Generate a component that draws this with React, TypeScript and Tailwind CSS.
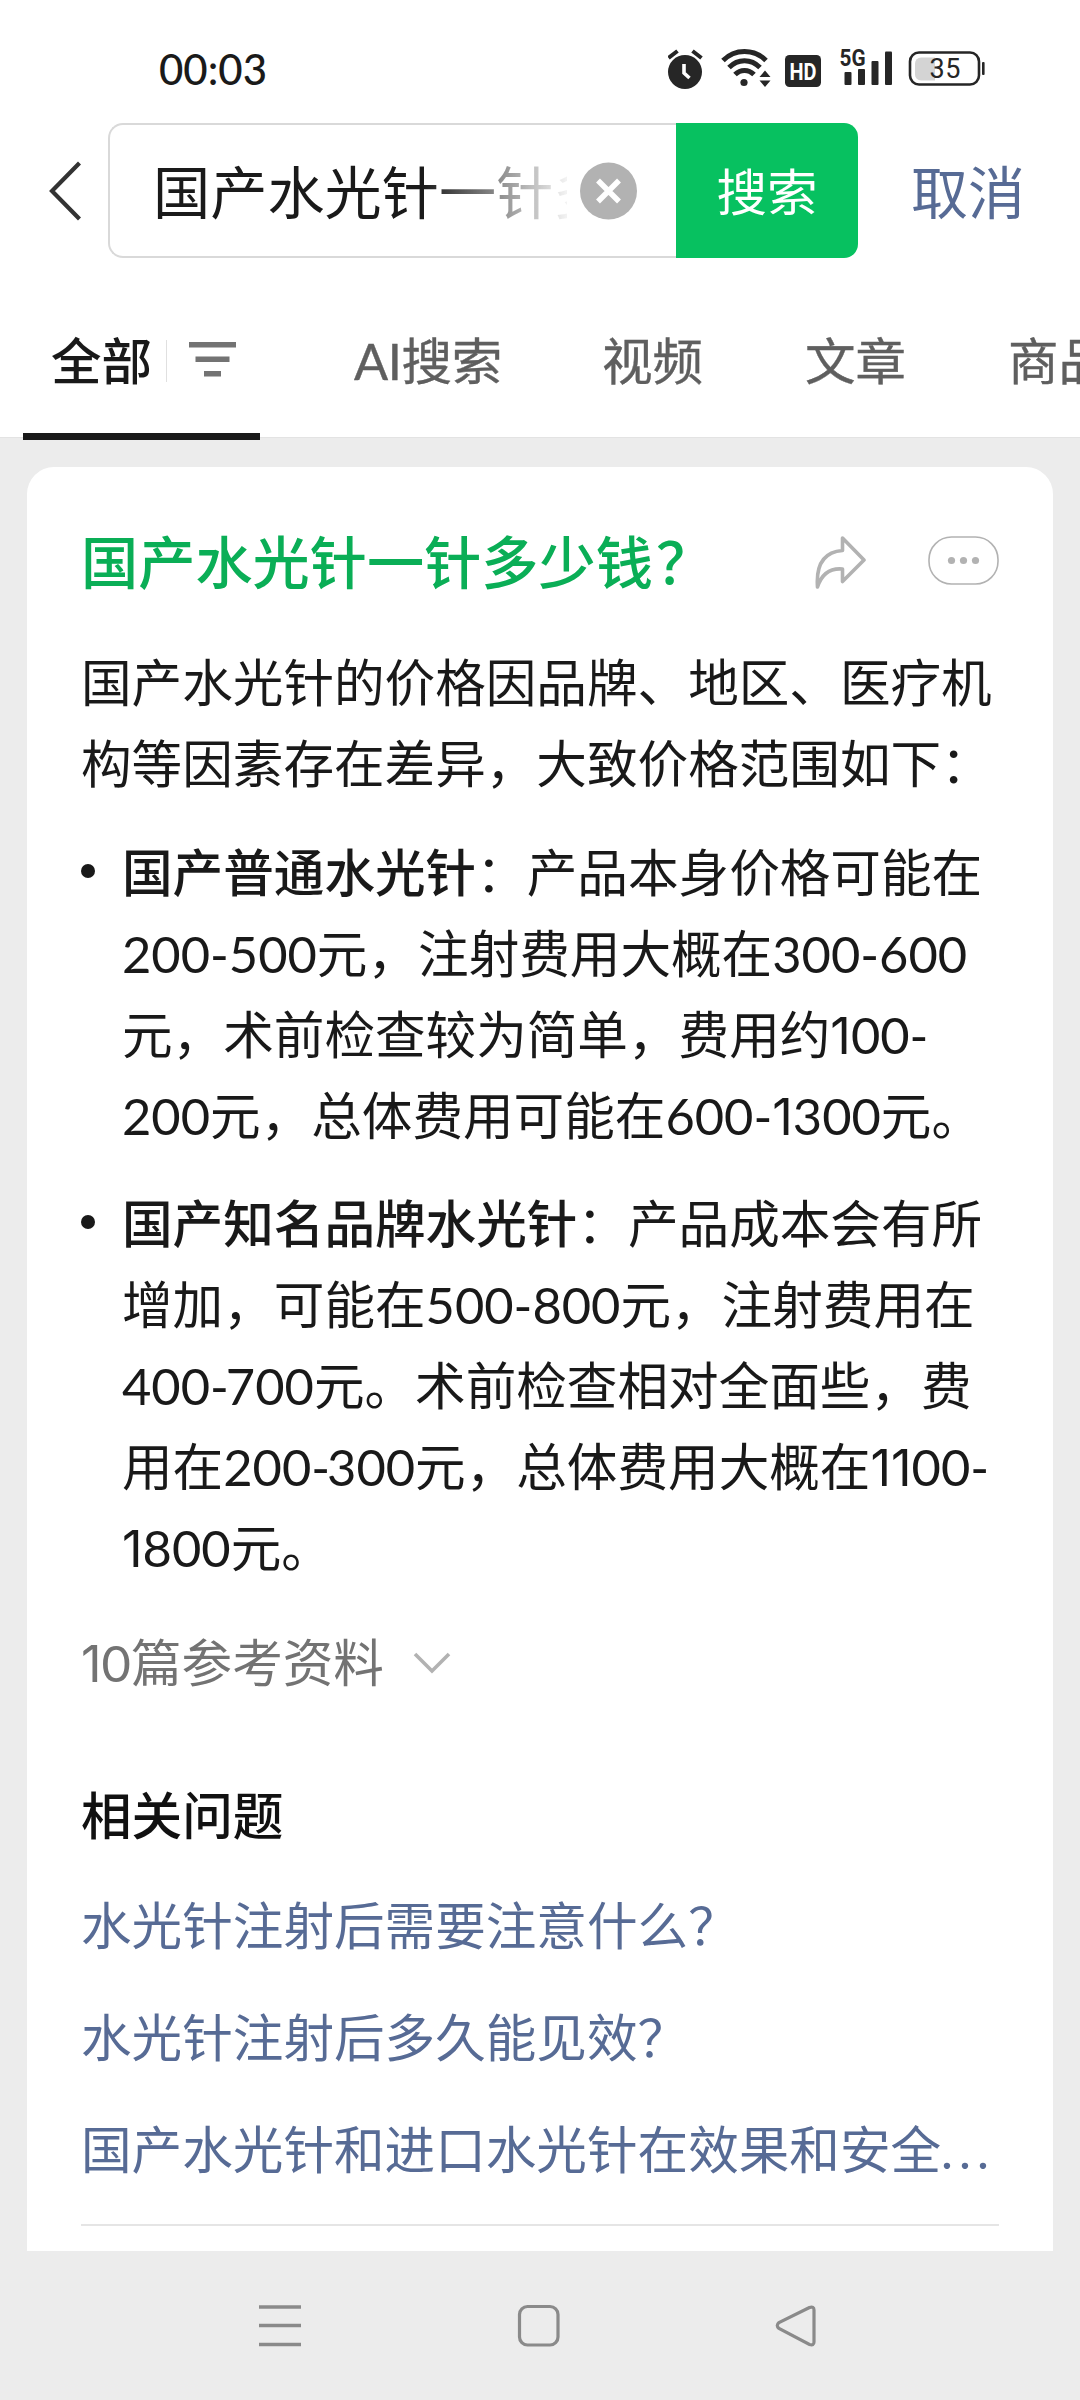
import type { ReactNode } from 'react'

const tabs = ['视频', '文章', '商品']

const intro = ['国产水光针的价格因品牌、地区、医疗机', '构等因素存在差异，大致价格范围如下：']

const priceItems = [
  {
    name: '国产普通水光针',
    first: '：产品本身价格可能在',
    rest: [
      '200-500元，注射费用大概在300-600',
      '元，术前检查较为简单，费用约100-',
      '200元，总体费用可能在600-1300元。',
    ],
  },
  {
    name: '国产知名品牌水光针',
    first: '：产品成本会有所',
    rest: [
      '增加，可能在500-800元，注射费用在',
      '400-700元。术前检查相对全面些，费',
      '用在200-300元，总体费用大概在1100-',
      '1800元。',
    ],
  },
]

const questions = ['水光针注射后需要注意什么？', '水光针注射后多久能见效？']

// narrow footless 1, and a tighter hyphen before 3 and 7
function Figures({ text }: { text: string }) {
  return text.split(/(1|-(?=[37]))/).map((part, i) => {
    if (part === '1') {
      return (
        <span key={i} className="font-[Inter] leading-none">
          1
        </span>
      )
    }
    if (part === '-') {
      return (
        <span key={i} className="tracking-[-3px]">
          -
        </span>
      )
    }
    return part
  })
}

function Line({ children }: { children: ReactNode }) {
  return <span className="block whitespace-nowrap">{children}</span>
}

function StatusBar() {
  return (
    <div className="flex h-[123px] items-start justify-between pt-[44px] pr-[92px] pl-[159px]">
      <span className="text-[42px] leading-[50px] font-medium text-[#1a1a1a]">00:03</span>
      <svg className="mt-[3px]" width="320" height="44" viewBox="668 47 320 44" fill="#262626">
        {/* alarm */}
        <circle cx="685" cy="72" r="17" />
        <path d="M668.5 58l9-7M701.5 58l-9-7" stroke="#262626" strokeWidth="4" />
        <path d="M684 64v9l5.500 5" stroke="#fff" strokeWidth="3.600" fill="none" />
        {/* wifi */}
        <g fill="none" stroke="#262626" strokeWidth="5">
          <path d="M723 60.500c12-12 31-12 43 0" />
          <path d="M729 67.500c9-9 22-9 31 0" />
          <path d="M735 74.500c5.500-5.500 13.500-5.500 19 0" />
        </g>
        <circle cx="744" cy="82.500" r="3.600" />
        <path d="M765 70.500l5.500 6.500h-11zM765 87l5.500-6.500h-11z" />
        {/* hd badge */}
        <rect x="785" y="55" width="36" height="32" rx="4.500" />
        <text x="803" y="79.500" textAnchor="middle" fontFamily="Roboto" fontWeight="700" fontSize="23" textLength="27" lengthAdjust="spacingAndGlyphs" fill="#fff">
          HD
        </text>
        {/* signal */}
        <text x="839.500" y="66" fontFamily="Roboto" fontWeight="700" fontSize="23" textLength="26" lengthAdjust="spacingAndGlyphs">
          5G
        </text>
        <rect x="844.500" y="72" width="7" height="13" rx="1" />
        <rect x="858" y="69" width="7" height="16" rx="1" />
        <rect x="871.500" y="61" width="7" height="24" rx="1" />
        <rect x="885" y="51.500" width="7" height="33.500" rx="1" />
        {/* battery */}
        <path d="M921 57.500h14v23h-14a6 6 0 0 1-6-6v-11a6 6 0 0 1 6-6z" fill="#d4d4d4" />
        <rect x="910" y="52.500" width="69" height="32" rx="9" fill="none" stroke="#262626" strokeWidth="2.600" />
        <rect x="982" y="62" width="2.600" height="13" rx="1" />
        <text x="945" y="78" textAnchor="middle" fontFamily="Roboto" fontSize="27" textLength="31">
          35
        </text>
      </svg>
    </div>
  )
}

function SearchBar() {
  return (
    <div className="flex h-[135px] items-center">
      <svg className="ml-[44px] shrink-0" width="64" height="70" viewBox="0 0 64 70" fill="none" stroke="#333" strokeWidth="4.2">
        <path d="M35.500 7L8 35l27.500 28" />
      </svg>
      <div className="flex h-[135px] w-[568px] shrink-0 items-center rounded-l-[15px] border-2 border-r-0 border-[#d9d9d9] pl-[43px]">
        <div className="w-[414px] overflow-hidden bg-gradient-to-r from-[#1a1a1a] from-65% to-[#1a1a1a]/5 bg-clip-text pt-[3px] text-[57.2px] leading-[80px] whitespace-nowrap text-transparent">
          国产水光针一针多
        </div>
        <svg className="ml-[13px] shrink-0" width="58" height="58" viewBox="0 0 58 58">
          <circle cx="28.500" cy="29" r="28.500" fill="#b2b2b2" />
          <path d="M18 18.500l21 21M39 18.500l-21 21" stroke="#fff" strokeWidth="5.500" />
        </svg>
      </div>
      <button className="h-[135px] w-[182px] shrink-0 rounded-r-[14px] bg-[#07c160] pt-[3px] text-[50.5px] text-white">搜索</button>
      <button className="ml-[53px] shrink-0 pt-[4px] text-[57px] text-[#576b95]">取消</button>
    </div>
  )
}

function Tabs() {
  return (
    <div className="h-[182px] overflow-hidden pt-[63px] text-[50.5px] leading-[80px]">
      <div className="flex">
        <div className="ml-[23px] flex h-[80px] w-[237px] shrink-0 items-center pl-[28px]">
          <span className="font-medium whitespace-nowrap text-[#191919]">全部</span>
          <span className="ml-[14px] h-[42px] w-px bg-[#e0e0e0]" />
          <svg className="ml-[22px]" width="47" height="40" fill="#737373">
            <rect width="47" height="5.500" y="1" />
            <rect width="34" height="5.500" x="6.500" y="15.500" />
            <rect width="17" height="5.500" x="15" y="30" />
          </svg>
        </div>
        <div className="ml-[94px] flex gap-[102px] whitespace-nowrap text-[#5f5f5f] [-webkit-text-stroke:0.4px]">
          <span className="w-[146px] tracking-[-0.4px]">AI搜索</span>
          {tabs.map((tab) => (
            <span key={tab}>{tab}</span>
          ))}
        </div>
      </div>
    </div>
  )
}

function AnswerHeader() {
  return (
    <div className="flex h-[95px] items-center">
      <h1 className="grow text-[57.2px] leading-[95px] font-medium whitespace-nowrap text-[#0aae56]">
        国产水光针一针多少钱<span className="ml-[3px]">？</span>
      </h1>
      <svg className="mr-[60px] shrink-0" width="54" height="56" viewBox="0 0 54 56" fill="none" stroke="#b2b2b2" strokeWidth="3.6" strokeLinejoin="round">
        <path d="M28.500 3L50 25 28.500 46.500V34C17 33 8 38 3.500 52C2 31 9 17 28.500 15.500z" />
      </svg>
      <svg className="-mt-[4px] shrink-0" width="71" height="49" viewBox="0 0 71 49">
        <rect x="1" y="1" width="69" height="47" rx="22.500" fill="none" stroke="#b2b2b2" strokeWidth="1.6" />
        <g fill="#b2b2b2">
          <circle cx="23.500" cy="24.500" r="3.600" />
          <circle cx="35.500" cy="24.500" r="3.600" />
          <circle cx="47.500" cy="24.500" r="3.600" />
        </g>
      </svg>
    </div>
  )
}

function AnswerCard() {
  return (
    <section className="mx-[27px] mt-[29px] h-[1784px] rounded-t-[27px] bg-white px-[54px] pt-[48px] text-[50.6px] leading-[81px] text-[#191919]">
      <AnswerHeader />
      <p className="mt-8">
        {intro.map((line) => (
          <Line key={line}>{line}</Line>
        ))}
      </p>
      <ul className="mt-7 space-y-[27px]">
        {priceItems.map((item) => (
          <li key={item.name} className="flex items-start">
            <span className="mt-8 mr-[27px] size-[14px] shrink-0 rounded-full bg-[#191919]" />
            <div>
              <Line>
                <b className="font-medium">{item.name}</b>
                {item.first}
              </Line>
              {item.rest.map((line) => (
                <Line key={line}>
                  <Figures text={line} />
                </Line>
              ))}
            </div>
          </li>
        ))}
      </ul>
      <div className="mt-[34px] flex items-center text-[#737373]">
        <span>
          <Figures text="10篇参考资料" />
        </span>
        <svg className="ml-[29px]" width="38" height="24" viewBox="0 0 38 24" fill="none" stroke="#b2b2b2" strokeWidth="3.6">
          <path d="M2 3l17 17L36 3" />
        </svg>
      </div>
      <h2 className="mt-[72px] font-medium text-[#111]">相关问题</h2>
      <div className="mt-[14px] leading-[112px] whitespace-nowrap text-[#576b95]">
        {questions.map((question) => (
          <a key={question} className="block">
            {question}
          </a>
        ))}
        <a className="block">
          国产水光针和进口水光针在效果和安全<span className="tracking-[6px]">...</span>
        </a>
      </div>
      <div className="mt-[18px] h-[2px] bg-[#e5e5e5]" />
    </section>
  )
}

function NavBar() {
  return (
    <nav className="flex h-[149px] items-start pt-[53px] pl-[259px]">
      <svg width="42" height="44" stroke="#8a8a8a" strokeWidth="3.6">
        <path d="M0 3h42M0 21.500h42M0 40.500h42" />
      </svg>
      <svg className="ml-[216px]" width="44" height="44" fill="none" stroke="#8a8a8a" strokeWidth="3.2">
        <rect x="2.500" y="2.500" width="38.500" height="38.500" rx="8" />
      </svg>
      <svg className="ml-[214px]" width="44" height="44" fill="none" stroke="#8a8a8a" strokeWidth="3.2">
        <path d="M34.500 3.500L4 18.500Q0.500 21.500 4 24.500L34.500 40.500Q39 42 39 38V6Q39 2 34.500 3.500z" />
      </svg>
    </nav>
  )
}

export default function App() {
  return (
    <div className="h-[2400px] w-[1080px] overflow-hidden bg-[#ececec] font-['Lato','Noto_Sans_CJK_SC',sans-serif]" lang="zh-CN">
      <header className="h-[438px] border-b border-[#e3e3e3] bg-white">
        <StatusBar />
        <SearchBar />
        <Tabs />
        <div className="relative -top-[7px] ml-[23px] h-[7px] w-[237px] bg-[#191919]" />
      </header>
      <AnswerCard />
      <NavBar />
    </div>
  )
}
